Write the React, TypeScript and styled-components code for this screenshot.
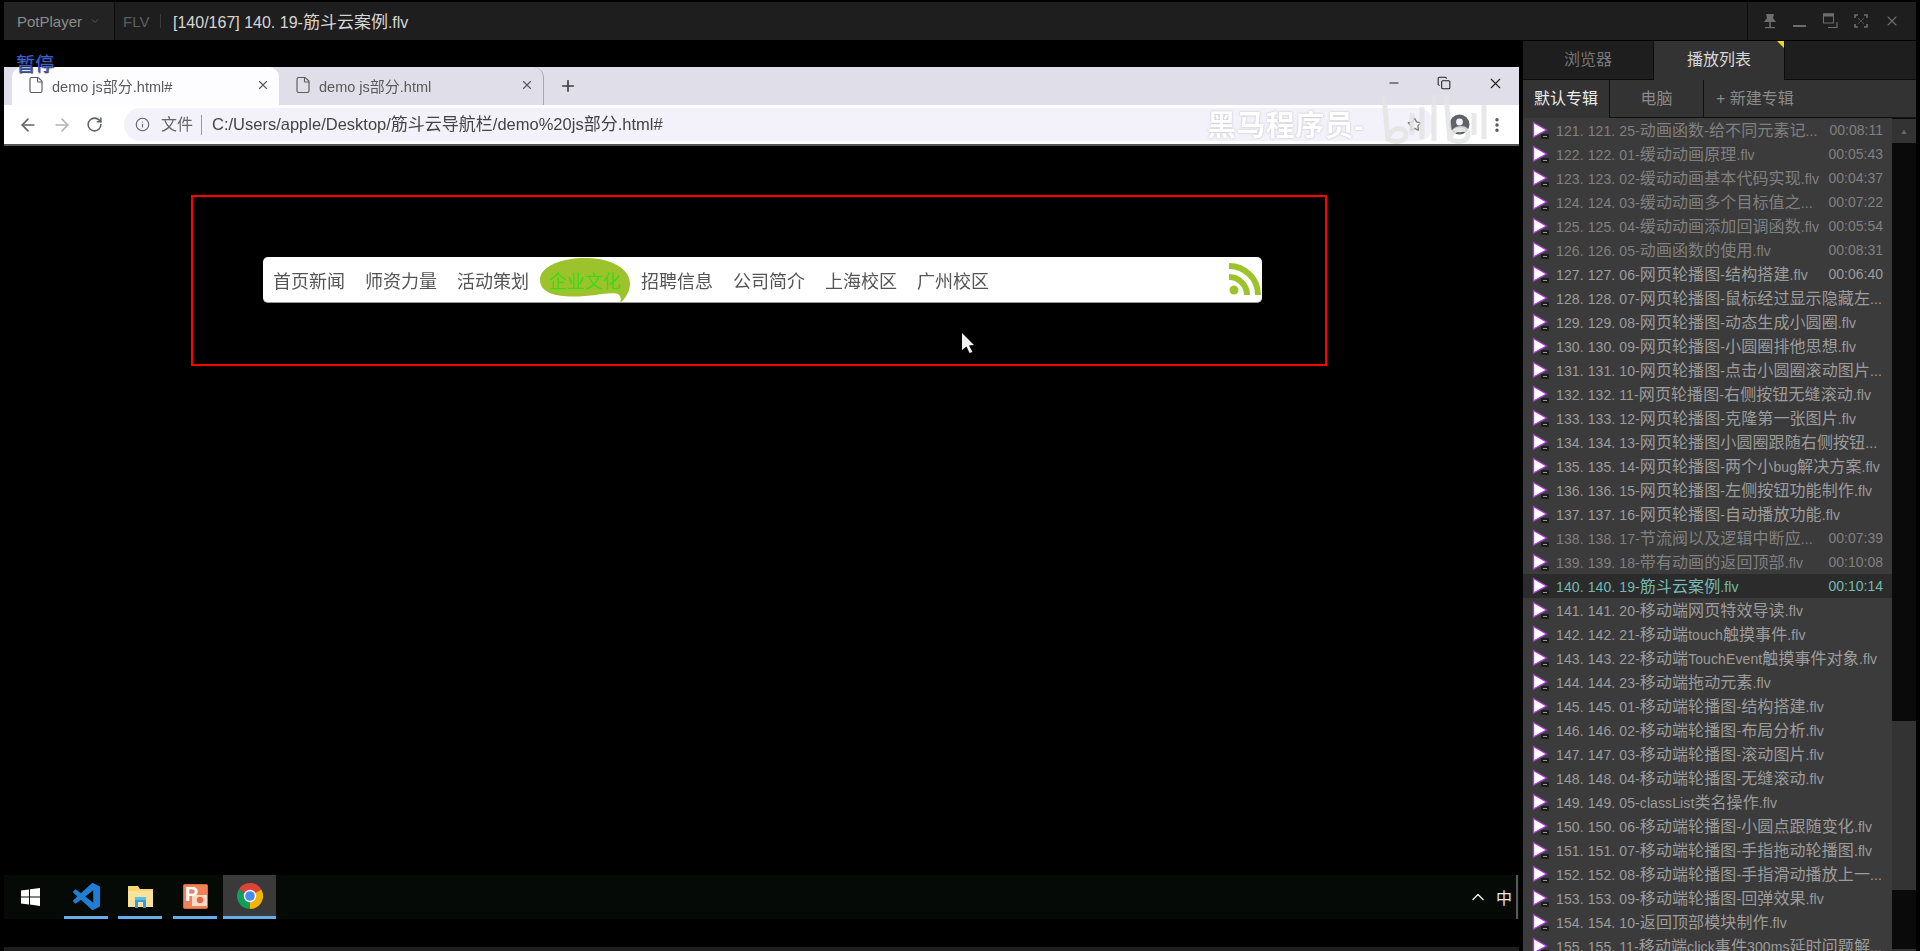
import React from "react";
import styled, { createGlobalStyle } from "styled-components";
import {
  ArrowLeft,
  ArrowRight,
  ChevronDown,
  ChevronUp,
  Copy,
  EllipsisVertical,
  File,
  Info,
  Minus,
  Plus,
  RotateCw,
  Star,
  X,
} from "lucide-react";

const SANS = `"Liberation Sans", "Noto Sans CJK SC", sans-serif`;

const GlobalStyle = createGlobalStyle`
  html, body {
    margin: 0;
    padding: 0;
    background: #000;
    overflow: hidden;
  }
  * {
    box-sizing: border-box;
  }
`;

const Screen = styled.div`
  display: flex;
  flex-direction: column;
  width: 1920px;
  height: 951px;
  overflow: hidden;
  background: #000;
  font-family: ${SANS};
`;

/* ---------- player title bar ---------- */

const TitleBar = styled.div`
  display: flex;
  align-items: stretch;
  flex: none;
  height: 38px;
  margin: 2px 4px 1px;
  background: #1e1e1e;
`;

const AppMenu = styled.div`
  display: flex;
  align-items: center;
  gap: 7px;
  width: 111px;
  padding-left: 13px;
  background: #232323;
  border-right: 1px solid #0c0c0c;
  color: #8c8c8c;
  font-size: 15px;
`;

const Format = styled.div`
  display: flex;
  align-items: center;
  width: 37px;
  margin: 0 0 0 8px;
  color: #5f5f5f;
  font-size: 15px;
`;

const Divider = styled.div`
  align-self: center;
  width: 1px;
  height: 14px;
  background: #3a3a3a;
`;

const FileTitle = styled.div`
  margin-left: 12px;
  color: #d6d6d6;
  font-size: 16px;
  line-height: 37px;
  white-space: pre;
`;

const WindowButtons = styled.div`
  display: flex;
  align-items: center;
  gap: 16px;
  margin-left: auto;
  width: 169px;
  padding-left: 15px;
  border-left: 1px solid #0c0c0c;
  color: #6e6e6e;
`;

/* ---------- captured video ---------- */

const Main = styled.div`
  display: flex;
  flex: 1;
  min-height: 0;
`;

const VideoArea = styled.div`
  position: relative;
  display: flex;
  flex-direction: column;
  flex: none;
  width: 1515px;
  margin-left: 4px;
`;

const PauseLabel = styled.div`
  position: absolute;
  z-index: 2;
  left: 12px;
  top: 13px;
  color: #3b5fd0;
  font-size: 19px;
  line-height: 22px;
  text-shadow: 1px 1px 1px #222;
`;

const Browser = styled.div`
  position: relative;
  flex: none;
  height: 79px;
  margin-top: 26px;
  background: #fff;
  border-bottom: 2px solid #555;
  filter: blur(0.35px);
`;

const TabStrip = styled.div`
  display: flex;
  align-items: stretch;
  height: 38px;
  padding-left: 8px;
  background: #dfdee9;
`;

const Tab = styled.div<{ $active?: boolean }>`
  display: flex;
  align-items: center;
  width: ${(p) => (p.$active ? 267 : 265)}px;
  padding: 0 9px 2px 15px;
  border-radius: 10px 10px 0 0;
  background: ${(p) => (p.$active ? "#fdfdff" : "transparent")};
  border-right: ${(p) => (p.$active ? "none" : "1px solid #a9a9b3")};
  color: #5a5a5a;
  font-size: 14.5px;
  white-space: pre;
`;

const TabLabel = styled.span`
  margin-left: 7px;
  flex: 1;
`;

const NewTab = styled.div`
  display: flex;
  align-items: center;
  margin-left: 15px;
  color: #3c3c3c;
`;

const BrowserControls = styled.div`
  display: flex;
  align-items: center;
  gap: 36px;
  margin-left: auto;
  padding-right: 15px;
  padding-bottom: 6px;
  color: #222;
`;

const Toolbar = styled.div`
  display: flex;
  align-items: center;
  height: 39px;
  padding-left: 14px;
  color: #5f6368;
`;

const NavIcons = styled.div`
  display: flex;
  align-items: center;
  gap: 14px;
  width: 106px;
`;

const Omnibox = styled.div`
  display: flex;
  align-items: center;
  width: 1310px;
  height: 33px;
  padding: 0 12px 0 11px;
  border-radius: 17px;
  background: #f3f1f9;
`;

const Scheme = styled.span`
  margin-left: 11px;
  padding-right: 8px;
  border-right: 1px solid #999;
  color: #666;
  font-size: 16px;
  line-height: 20px;
`;

const Url = styled.span`
  margin: 0 0 5px 10px;
  color: #444;
  font-size: 16.5px;
  white-space: pre;
`;

const BookmarkStar = styled(Star)`
  margin-left: auto;
`;

const ToolbarEnd = styled.div`
  display: flex;
  align-items: center;
  gap: 18px;
  margin-left: 15px;
`;

const Watermark = styled.div`
  position: absolute;
  left: 1203px;
  top: 42px;
  color: #fff;
  font-size: 29px;
  font-weight: 700;
  line-height: 34px;
  letter-spacing: 0.4px;
  text-shadow: 0 0 2px rgba(130, 130, 130, 0.55);
  white-space: pre;
`;

const BiliMark = styled.svg`
  position: absolute;
  left: 1376px;
  top: 28px;
`;

const DemoBox = styled.div`
  position: relative;
  flex: none;
  width: 1136px;
  height: 171px;
  margin: 49px 0 0 187px;
  padding: 60px 0 0 70px;
  border: 2px solid #f00;
`;

const NavBar = styled.div`
  position: relative;
  display: flex;
  align-items: center;
  width: 999px;
  height: 46px;
  padding-right: 1px;
  border-radius: 5px;
  background: #fff;
  border-bottom: 1px solid #999;
  filter: blur(0.35px);
`;

const NavItem = styled.a<{ $active?: boolean }>`
  position: relative;
  z-index: 1;
  flex: none;
  width: 92px;
  padding-top: 4px;
  text-align: center;
  color: ${(p) => (p.$active ? "#3bd916" : "#555")};
  font-size: 18px;
  line-height: 46px;
`;

const Cloud = styled.svg`
  position: absolute;
  left: 277px;
  top: 1px;
`;

const RssIcon = styled.svg`
  flex: none;
  margin-left: auto;
`;

const MouseCursor = styled.svg`
  position: absolute;
  left: 768px;
  top: 136px;
`;

const Taskbar = styled.div`
  display: flex;
  align-items: stretch;
  flex: none;
  height: 44px;
  margin-top: 509px;
  background: #050a06;
`;

const StartButton = styled.div`
  display: flex;
  align-items: center;
  justify-content: center;
  width: 53px;
  margin-right: 7px;
`;

const TaskItem = styled.div<{ $active?: boolean; $gap?: number }>`
  display: flex;
  align-items: center;
  justify-content: center;
  width: ${(p) => (p.$active ? 53 : 44)}px;
  margin-right: ${(p) => p.$gap ?? 10}px;
  padding-top: 1px;
  border-bottom: 3px solid #62aeee;
  background: ${(p) => (p.$active ? "#3a3a3a" : "transparent")};
`;

const Tray = styled.div`
  display: flex;
  align-items: center;
  margin-left: auto;
  padding-right: 1px;
  color: #e8e8e8;
  font-size: 16px;
`;

const TrayLang = styled.span`
  margin: 0 4px 0 8px;
`;

const TrayEdge = styled.div`
  align-self: stretch;
  width: 2px;
  background: #5a5a5a;
`;

const BottomStrip = styled.div`
  flex: none;
  height: 4px;
  margin-top: 28px;
  background: #1e1e1e;
`;

/* ---------- playlist panel ---------- */

const Panel = styled.div`
  display: flex;
  flex-direction: column;
  flex: none;
  width: 393px;
  margin-left: 4px;
  min-height: 0;
`;

const PanelTabs = styled.div`
  display: flex;
  flex: none;
  height: 39px;
  background: #1e1e1e;
  border-bottom: 1px solid #0c0c0c;
`;

const PanelTab = styled.div<{ $active?: boolean }>`
  position: relative;
  flex: none;
  width: ${(p) => (p.$active ? 132 : 130)}px;
  margin-bottom: ${(p) => (p.$active ? -1 : 0)}px;
  text-align: center;
  color: ${(p) => (p.$active ? "#d8d8d8" : "#767676")};
  background: ${(p) => (p.$active ? "#333" : "transparent")};
  border-left: ${(p) => (p.$active ? "1px solid #0c0c0c" : "none")};
  border-right: ${(p) => (p.$active ? "1px solid #0c0c0c" : "none")};
  font-size: 16px;
  line-height: 38px;
`;

const Flag = styled.span`
  position: absolute;
  top: 0;
  right: 0;
  width: 0;
  height: 0;
  border-top: 7px solid #f5d90a;
  border-left: 7px solid transparent;
`;

const SubTabs = styled.div`
  display: flex;
  flex: none;
  height: 38px;
  background: #333;
`;

const SubTab = styled.div<{ $active?: boolean; $w: number; $grow?: boolean }>`
  flex: ${(p) => (p.$grow ? 1 : "none")};
  width: ${(p) => p.$w}px;
  padding-left: ${(p) => (p.$grow ? 12 : 0)}px;
  text-align: ${(p) => (p.$grow ? "left" : "center")};
  color: ${(p) => (p.$active ? "#ececec" : "#8a8a8a")};
  border-right: ${(p) => (p.$grow ? "none" : "1px solid #111")};
  border-bottom: ${(p) => (p.$active ? "none" : "1px solid #111")};
  font-size: 16px;
  line-height: 37px;
  white-space: pre;
`;

const ListWrap = styled.div`
  display: flex;
  flex: 1;
  min-height: 0;
`;

const PlayList = styled.div`
  flex: none;
  width: 369px;
  background: #3b3b3b;
  overflow: hidden;
`;

const Row = styled.div<{ $current?: boolean }>`
  display: flex;
  align-items: center;
  height: 24px;
  padding: 0 9px;
  background: ${(p) => (p.$current ? "#2b2b2b" : "transparent")};
`;

const RowIcon = styled.svg`
  flex: none;
  margin-right: 6px;
`;

const RowTitle = styled.span<{ $tone: string }>`
  flex: 1;
  margin-bottom: 2px;
  color: ${(p) => p.$tone};
  font-size: 14px;
  letter-spacing: 0.1px;
  white-space: pre;
  overflow: hidden;
`;

const RowTime = styled.span<{ $tone: string }>`
  flex: none;
  margin-bottom: 1px;
  color: ${(p) => p.$tone};
  font-size: 14px;
`;

const ScrollTrack = styled.div`
  display: flex;
  flex-direction: column;
  flex: none;
  width: 24px;
  padding-top: 1px;
  background: #0a0a0a;
`;

const ScrollUp = styled.div`
  display: flex;
  align-items: center;
  justify-content: center;
  flex: none;
  height: 24px;
  background: #333;
  color: #666;
  font-size: 8px;
`;

const ScrollThumb = styled.div`
  flex: none;
  height: 169px;
  margin-top: 578px;
  background: #333;
`;

const ScrollDown = styled.div`
  flex: none;
  height: 4px;
  margin-top: 59px;
  background: #333;
`;

const CjkRun = styled.span<{ $size: number }>`
  font-size: ${(p) => p.$size}px;
  font-family: "Noto Sans CJK SC", sans-serif;
  font-weight: 400;
`;

const Mixed = ({ text, size }: { text: string; size: number }) => (
  <>
    {text.split(/([\u4e00-\u9fff]+)/).map((part, i) =>
      i % 2 === 1 ? (
        <CjkRun key={i} $size={size}>
          {part}
        </CjkRun>
      ) : (
        part
      )
    )}
  </>
);

const PlayIcon = () => (
  <RowIcon width="18" height="18" viewBox="0 0 18 18">
    <path d="M1.5 1.5 L14.5 9 L1.5 16 Z" fill="#fff" stroke="#a53fd6" strokeWidth="1.4" />
    <rect x="9" y="13" width="8" height="5" fill="#1c1c1c" />
    <rect x="11" y="15" width="4" height="1" fill="#999" />
  </RowIcon>
);

const VsCodeLogo = () => (
  <svg width="27" height="27" viewBox="0 0 24 24" fill="#1f7fd6">
    <path d="M23.15 2.587 18.21.21a1.494 1.494 0 0 0-1.705.29l-9.46 8.63-4.12-3.128a.999.999 0 0 0-1.276.057L.327 7.261A1 1 0 0 0 .326 8.74L3.899 12 .326 15.26a1 1 0 0 0 .001 1.479L1.65 17.94a.999.999 0 0 0 1.276.057l4.12-3.128 9.46 8.63a1.492 1.492 0 0 0 1.704.29l4.942-2.377A1.5 1.5 0 0 0 24 20.06V3.939a1.5 1.5 0 0 0-.85-1.352zm-5.146 14.861L10.826 12l7.178-5.448v10.896z" />
  </svg>
);

const ChromeLogo = () => (
  <svg width="26" height="26" viewBox="0 0 26 26">
    <path d="M13 13 L1.74 6.5 A13 13 0 0 1 24.26 6.5 Z" fill="#db4437" />
    <path d="M13 13 L24.26 6.5 A13 13 0 0 1 13 26 Z" fill="#f4b400" />
    <path d="M13 13 L13 26 A13 13 0 0 1 1.74 6.5 Z" fill="#0f9d58" />
    <circle cx="13" cy="13" r="6.2" fill="#fff" />
    <circle cx="13" cy="13" r="4.8" fill="#4a8af0" />
  </svg>
);

const FolderLogo = () => (
  <svg width="25" height="24" viewBox="0 0 25 24">
    <path d="M0 2 H10 L12 5 H25 V23 H0 Z" fill="#f7d774" />
    <rect x="0" y="7" width="25" height="16" fill="#fbe29a" />
    <path d="M7 24 V15 H18 V24 H15 V18 H10 V24 Z" fill="#2d9fe0" />
    <rect x="7" y="13" width="11" height="3" fill="#58c0f0" />
  </svg>
);

const PowerPointLogo = () => (
  <svg width="25" height="25" viewBox="0 0 25 25">
    <rect x="0.5" y="0.5" width="24" height="24" rx="1" fill="#ee8258" stroke="#d9663a" />
    <rect x="9" y="11" width="15" height="11" fill="#f8d8c8" />
    <circle cx="17" cy="16" r="3.2" fill="#e8663a" />
    <text x="2" y="17" fontFamily="Liberation Sans, sans-serif" fontWeight="700" fontSize="20" fill="#fff">
      P
    </text>
  </svg>
);

const WindowsLogo = () => (
  <svg width="19" height="18" viewBox="0 0 19 18">
    <path d="M0 2.6 L8 1.5 V8.4 H0 Z M9 1.3 L19 0 V8.4 H9 Z M0 9.5 H8 V16.4 L0 15.4 Z M9 9.5 H19 V18 L9 16.6 Z" fill="#fff" />
  </svg>
);

const ProfileIcon = () => (
  <svg width="21" height="21" viewBox="0 0 21 21">
    <circle cx="10.5" cy="10.5" r="10" fill="#5f6368" />
    <circle cx="10.5" cy="8" r="3.4" fill="#f3f1f9" />
    <path d="M4 16 C6 12.5 15 12.5 17 16 C14 19 7 19 4 16 Z" fill="#f3f1f9" />
  </svg>
);

const rows: { title: string; time?: string; dim?: boolean; current?: boolean }[] = [
  { title: "121. 121. 25-动画函数-给不同元素记...", time: "00:08:11", dim: true },
  { title: "122. 122. 01-缓动动画原理.flv", time: "00:05:43", dim: true },
  { title: "123. 123. 02-缓动动画基本代码实现.flv", time: "00:04:37", dim: true },
  { title: "124. 124. 03-缓动动画多个目标值之...", time: "00:07:22", dim: true },
  { title: "125. 125. 04-缓动动画添加回调函数.flv", time: "00:05:54", dim: true },
  { title: "126. 126. 05-动画函数的使用.flv", time: "00:08:31", dim: true },
  { title: "127. 127. 06-网页轮播图-结构搭建.flv", time: "00:06:40" },
  { title: "128. 128. 07-网页轮播图-鼠标经过显示隐藏左..." },
  { title: "129. 129. 08-网页轮播图-动态生成小圆圈.flv" },
  { title: "130. 130. 09-网页轮播图-小圆圈排他思想.flv" },
  { title: "131. 131. 10-网页轮播图-点击小圆圈滚动图片..." },
  { title: "132. 132. 11-网页轮播图-右侧按钮无缝滚动.flv" },
  { title: "133. 133. 12-网页轮播图-克隆第一张图片.flv" },
  { title: "134. 134. 13-网页轮播图小圆圈跟随右侧按钮..." },
  { title: "135. 135. 14-网页轮播图-两个小bug解决方案.flv" },
  { title: "136. 136. 15-网页轮播图-左侧按钮功能制作.flv" },
  { title: "137. 137. 16-网页轮播图-自动播放功能.flv" },
  { title: "138. 138. 17-节流阀以及逻辑中断应...", time: "00:07:39", dim: true },
  { title: "139. 139. 18-带有动画的返回顶部.flv", time: "00:10:08", dim: true },
  { title: "140. 140. 19-筋斗云案例.flv", time: "00:10:14", current: true },
  { title: "141. 141. 20-移动端网页特效导读.flv" },
  { title: "142. 142. 21-移动端touch触摸事件.flv" },
  { title: "143. 143. 22-移动端TouchEvent触摸事件对象.flv" },
  { title: "144. 144. 23-移动端拖动元素.flv" },
  { title: "145. 145. 01-移动端轮播图-结构搭建.flv" },
  { title: "146. 146. 02-移动端轮播图-布局分析.flv" },
  { title: "147. 147. 03-移动端轮播图-滚动图片.flv" },
  { title: "148. 148. 04-移动端轮播图-无缝滚动.flv" },
  { title: "149. 149. 05-classList类名操作.flv" },
  { title: "150. 150. 06-移动端轮播图-小圆点跟随变化.flv" },
  { title: "151. 151. 07-移动端轮播图-手指拖动轮播图.flv" },
  { title: "152. 152. 08-移动端轮播图-手指滑动播放上一..." },
  { title: "153. 153. 09-移动端轮播图-回弹效果.flv" },
  { title: "154. 154. 10-返回顶部模块制作.flv" },
  { title: "155. 155. 11-移动端click事件300ms延时问题解..." },
];

const navItems = ["首页新闻", "师资力量", "活动策划", "企业文化", "招聘信息", "公司简介", "上海校区", "广州校区"];

const toneOf = (dim?: boolean, current?: boolean) => {
  if (current) return "#76b9b1";
  return dim ? "#808080" : "#9c9c9c";
};

const App = () => {
  return (
    <Screen>
      <GlobalStyle />
      <TitleBar>
        <AppMenu>
          PotPlayer
          <ChevronDown size={12} strokeWidth={1.5} color="#666" />
        </AppMenu>
        <Format>FLV</Format>
        <Divider />
        <FileTitle>
          <Mixed text="[140/167] 140. 19-筋斗云案例.flv" size={17} />
        </FileTitle>
        <WindowButtons>
          <svg width="14" height="16" viewBox="0 0 14 16" fill="currentColor">
            <path d="M3 1 H11 L10 5 L13 9 H1 L4 5 Z" />
            <rect x="6.2" y="9" width="1.6" height="6" />
            <rect x="2" y="14" width="10" height="1.2" />
          </svg>
          <svg width="13" height="16" viewBox="0 0 13 16" fill="currentColor">
            <rect x="0" y="12" width="13" height="2" />
          </svg>
          <svg width="16" height="16" viewBox="0 0 16 16" fill="none" stroke="currentColor">
            <rect x="1.5" y="1" width="10" height="9" />
            <rect x="1.5" y="1" width="10" height="2" fill="currentColor" />
            <path d="M15 9 V14.5 H6" strokeWidth="1.2" />
          </svg>
          <svg width="14" height="14" viewBox="0 0 14 14" fill="none" stroke="currentColor" strokeWidth="1.6">
            <path d="M1 4 V1 H4 M10 1 H13 V4 M13 10 V13 H10 M4 13 H1 V10" />
            <path d="M4 4 L10 10 M10 4 L4 10" strokeWidth="0.6" />
          </svg>
          <X size={16} strokeWidth={1.6} />
        </WindowButtons>
      </TitleBar>

      <Main>
        <VideoArea>
          <PauseLabel>暂停</PauseLabel>
          <Browser>
            <TabStrip>
              <Tab $active>
                <File size={18} strokeWidth={1.5} />
                <TabLabel>
                  <Mixed text="demo js部分.html#" size={15} />
                </TabLabel>
                <X size={14} strokeWidth={2} />
              </Tab>
              <Tab>
                <File size={18} strokeWidth={1.5} />
                <TabLabel>
                  <Mixed text="demo js部分.html" size={15} />
                </TabLabel>
                <X size={14} strokeWidth={2} />
              </Tab>
              <NewTab>
                <Plus size={18} strokeWidth={2.2} />
              </NewTab>
              <BrowserControls>
                <Minus size={14} strokeWidth={1.8} />
                <Copy size={14} strokeWidth={1.8} />
                <X size={17} strokeWidth={1.6} />
              </BrowserControls>
            </TabStrip>
            <Toolbar>
              <NavIcons>
                <ArrowLeft size={20} strokeWidth={2} />
                <ArrowRight size={20} strokeWidth={2} color="#b4b4b4" />
                <RotateCw size={17} strokeWidth={2.2} />
              </NavIcons>
              <Omnibox>
                <Info size={15} strokeWidth={1.8} />
                <Scheme>文件</Scheme>
                <Url>
                  <Mixed text="C:/Users/apple/Desktop/筋斗云导航栏/demo%20js部分.html#" size={17} />
                </Url>
                <BookmarkStar size={15} color="#777" />
              </Omnibox>
              <ToolbarEnd>
                <ProfileIcon />
                <EllipsisVertical size={18} strokeWidth={2.6} color="#555" />
              </ToolbarEnd>
            </Toolbar>
            <Watermark>黑马程序员-</Watermark>
            <BiliMark width="114" height="50" viewBox="0 0 114 50" fill="none" stroke="rgba(228,228,228,0.85)" strokeWidth="5">
              <path d="M4 0 L8 46 M8 42 C14 30 26 32 26 40 C26 47 14 48 8 44" />
              <path d="M32 18 V40 M42 12 V44 M54 0 V46" />
              <path d="M66 0 L70 46 M70 42 C76 30 88 32 88 40 C88 47 76 48 70 44" />
              <path d="M94 18 V40 M104 10 V44" />
            </BiliMark>
          </Browser>

          <DemoBox>
            <NavBar>
              <Cloud width="91" height="45" viewBox="0 0 91 45">
                <path
                  d="M0 22 C0 8 22 0 45 0 C70 0 91 10 90 27 C89 36 84 42 80 45 C82 40 80 36 76 35.5 C66 34 52 39 30 38.5 C12 38 0 33 0 22 Z"
                  fill="#9dc32c"
                />
              </Cloud>
              {navItems.map((label) => (
                <NavItem key={label} $active={label === "企业文化"}>
                  {label}
                </NavItem>
              ))}
              <RssIcon width="32" height="33" viewBox="0 0 32 33" fill="none" stroke="#9dc32c" strokeWidth="6">
                <path d="M0 3 A29 29 0 0 1 29 32" />
                <path d="M0 14 A18 18 0 0 1 18 32" />
                <circle cx="5" cy="27" r="4.5" fill="#9dc32c" stroke="none" />
              </RssIcon>
            </NavBar>
            <MouseCursor width="14" height="20" viewBox="0 0 14 20">
              <path d="M1 0 L13 12 L8 12.5 L11.5 19 L8.5 20 L5.5 13.5 L1 17 Z" fill="#f2f2f2" />
            </MouseCursor>
          </DemoBox>

          <Taskbar>
            <StartButton>
              <WindowsLogo />
            </StartButton>
            <TaskItem>
              <VsCodeLogo />
            </TaskItem>
            <TaskItem $gap={11}>
              <FolderLogo />
            </TaskItem>
            <TaskItem $gap={6}>
              <PowerPointLogo />
            </TaskItem>
            <TaskItem $active $gap={0}>
              <ChromeLogo />
            </TaskItem>
            <Tray>
              <ChevronUp size={20} strokeWidth={1.8} />
              <TrayLang>中</TrayLang>
              <TrayEdge />
            </Tray>
          </Taskbar>
          <BottomStrip />
        </VideoArea>

        <Panel>
          <PanelTabs>
            <PanelTab>浏览器</PanelTab>
            <PanelTab $active>
              播放列表
              <Flag />
            </PanelTab>
          </PanelTabs>
          <SubTabs>
            <SubTab $active $w={87}>
              默认专辑
            </SubTab>
            <SubTab $w={94}>电脑</SubTab>
            <SubTab $w={212} $grow>
              + 新建专辑
            </SubTab>
          </SubTabs>
          <ListWrap>
            <PlayList>
              {rows.map((row) => (
                <Row key={row.title} $current={row.current}>
                  <PlayIcon />
                  <RowTitle $tone={toneOf(row.dim, row.current)}>
                    <Mixed text={row.title} size={16} />
                  </RowTitle>
                  {row.time && <RowTime $tone={toneOf(row.dim, row.current)}>{row.time}</RowTime>}
                </Row>
              ))}
            </PlayList>
            <ScrollTrack>
              <ScrollUp>▲</ScrollUp>
              <ScrollThumb />
              <ScrollDown />
            </ScrollTrack>
          </ListWrap>
        </Panel>
      </Main>
    </Screen>
  );
};

export default App;
